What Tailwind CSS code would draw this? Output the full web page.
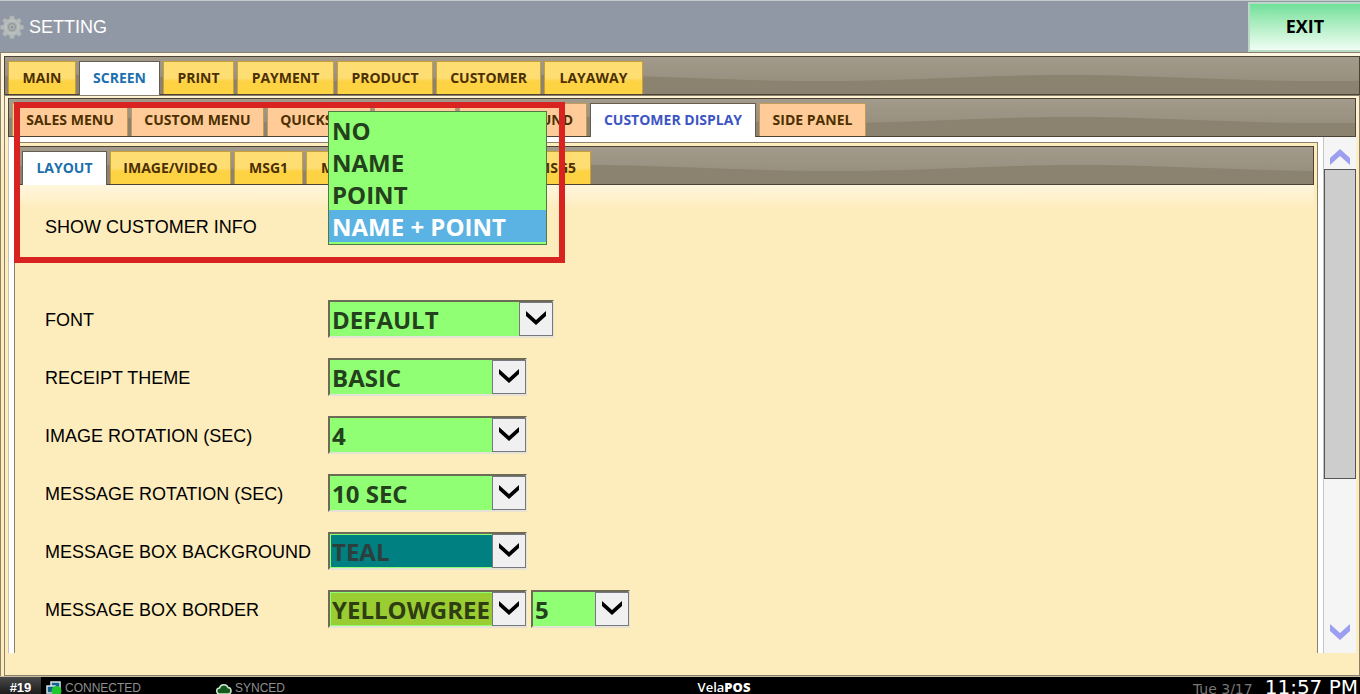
<!DOCTYPE html>
<html lang="en">
<head>
  <meta charset="UTF-8">
  <meta name="viewport" content="width=device-width, initial-scale=1.0">
  <title>VelaPOS - Setting</title>
  <script src="https://cdn.jsdelivr.net/npm/@tailwindcss/browser@4"></script>
</head>
<body class="h-screen overflow-hidden flex flex-col bg-[#fdecbc] font-['Open_Sans','Noto_Sans',sans-serif] text-black">

  <!-- shared svg parts -->
  <svg class="absolute w-0 h-0">
    <symbol id="chevron" viewBox="0 0 22 16"><path d="M1 0v5l10 9L21 5V0L11 9z"/></symbol>
    <symbol id="chevronBold" viewBox="0 0 22 16"><path d="M1 0v7l10 9L21 7V0L11 9z"/></symbol>
    <defs>
      <pattern id="wave" width="500" height="40" patternUnits="userSpaceOnUse">
        <path d="M-187 24C-96 24 -28 18 63 18C154 18 222 24 313 24C404 24 472 18 563 18V40H-187z" fill="#8b8370"/>
      </pattern>
    </defs>
  </svg>

  <!-- header -->
  <header class="h-[52px] shrink-0 flex items-center bg-[#9098a6] border-t border-[#c5cacb]">
    <svg class="w-6 h-6 shrink-0" viewBox="0 0 24 24">
      <g fill="#b3bab8" stroke="#a0a8a8" stroke-width="0.5">
        <path d="M10 1h4l.6 3 1.900.8L19 3l2.600 2.600-1.700 2.500.8 1.900 3 .6v3.400l-3 .6-.8 1.900 1.700 2.500L19 21.500l-2.500-1.700-1.900.8-.6 3h-4l-.6-3-1.900-.8L5 21.500 2.400 19l1.700-2.500-.8-1.900-3-.6v-3.400l3-.6.8-1.900L2.400 5.600 5 3l2.500 1.800L9.400 4z"/>
      </g>
      <circle cx="12" cy="12" r="6.200" fill="#a9b1b0" stroke="#c6cbc9"/>
      <circle cx="12" cy="12" r="3.400" fill="#b4bbba" stroke="#87908f"/>
      <circle cx="12" cy="12" r="1.600" fill="#8a939b"/>
    </svg>
    <h1 class="ml-[5px] font-['Liberation_Sans',Arial,sans-serif] text-lg text-white">SETTING</h1>
    <button type="button" class="ml-auto w-28 h-[50px] pb-[2px] border-2 border-r-0 border-[#b9d8c6] bg-linear-to-b from-[#6fe09a] to-[#effdf3] font-bold text-lg">EXIT</button>
  </header>

  <main class="relative flex-1 min-h-0 flex flex-col pt-[3px] pl-[3px] border-t border-l border-[#8c806c] bg-linear-to-b from-[#fff6e0] to-[#fdecbc] to-20%">

    <!-- main tabs -->
    <nav class="relative h-[39px] shrink-0 flex items-end gap-[3px] pl-[3px] border border-[#4c4335] bg-linear-to-b from-[#a29a8a] to-[#938b7a] text-sm font-bold text-[#4c3000]">
      <svg class="absolute inset-0 w-full h-full"><rect width="100%" height="100%" fill="url(#wave)"/></svg>
      <button type="button" class="relative h-[33px] w-[68px] border border-b-0 border-[#c9a038] bg-linear-to-b from-[#fedd72] from-50% to-[#fdd243] to-60%">MAIN</button>
      <button type="button" class="relative h-[34px] -mb-px pb-[2px] w-[81px] border border-b-0 border-[#655d4e] bg-white text-[#1c6fad]">SCREEN</button>
      <button type="button" class="relative h-[33px] w-[71px] border border-b-0 border-[#c9a038] bg-linear-to-b from-[#fedd72] from-50% to-[#fdd243] to-60%">PRINT</button>
      <button type="button" class="relative h-[33px] w-[97px] border border-b-0 border-[#c9a038] bg-linear-to-b from-[#fedd72] from-50% to-[#fdd243] to-60%">PAYMENT</button>
      <button type="button" class="relative h-[33px] w-[96px] border border-b-0 border-[#c9a038] bg-linear-to-b from-[#fedd72] from-50% to-[#fdd243] to-60%">PRODUCT</button>
      <button type="button" class="relative h-[33px] w-[105px] border border-b-0 border-[#c9a038] bg-linear-to-b from-[#fedd72] from-50% to-[#fdd243] to-60%">CUSTOMER</button>
      <button type="button" class="relative h-[33px] w-[99px] border border-b-0 border-[#c9a038] bg-linear-to-b from-[#fedd72] from-50% to-[#fdd243] to-60%">LAYAWAY</button>
    </nav>

    <section class="flex-1 min-h-0 flex flex-col pt-[2px] px-[3px] pb-[22px] border border-[#8c806c]">

      <!-- screen tabs -->
      <nav class="relative h-[39px] shrink-0 flex items-end gap-[3px] pl-[3px] border border-[#4c4335] bg-linear-to-b from-[#a29a8a] to-[#938b7a] text-sm font-bold text-[#4c3000]">
        <svg class="absolute inset-0 w-full h-full"><rect width="100%" height="100%" fill="url(#wave)"/></svg>
        <button type="button" class="relative h-[33px] w-[116px] border border-b-0 border-[#c49a58] bg-[#ffcb98]">SALES MENU</button>
        <button type="button" class="relative h-[33px] w-[133px] border border-b-0 border-[#c49a58] bg-[#ffcb98]">CUSTOM MENU</button>
        <button type="button" class="relative h-[33px] w-[104px] border border-b-0 border-[#c49a58] bg-[#ffcb98]">QUICKSALE</button>
        <button type="button" class="relative h-[33px] w-[82px] border border-b-0 border-[#c49a58] bg-[#ffcb98]">TABLE</button>
        <button type="button" class="relative h-[33px] w-[128px] border border-b-0 border-[#c49a58] bg-[#ffcb98]">BACKGROUND</button>
        <button type="button" class="relative h-[34px] -mb-px pb-[2px] w-[166px] border border-b-0 border-[#655d4e] bg-white text-[#3d55c4]">CUSTOMER DISPLAY</button>
        <button type="button" class="relative h-[33px] w-[107px] border border-b-0 border-[#c49a58] bg-[#ffcb98]">SIDE PANEL</button>
      </nav>

      <div class="flex-1 min-h-0 flex">
        <div class="flex-1 flex pt-[5px] px-[5px] border-l border-[#c9c2b4] bg-white">
          <div class="flex-1 p-[3px] border border-b-0 border-[#8c806c] bg-[#fdecbc]">

            <!-- display tabs -->
            <nav class="relative h-[39px] flex items-end gap-[3px] pl-[3px] border border-[#4c4335] bg-linear-to-b from-[#a29a8a] to-[#938b7a] text-sm font-bold text-[#4c3000]">
              <svg class="absolute inset-0 w-full h-full"><rect width="100%" height="100%" fill="url(#wave)"/></svg>
              <button type="button" class="relative h-[34px] -mb-px pb-[2px] w-[85px] border border-b-0 border-[#655d4e] bg-white text-[#1c6fad]">LAYOUT</button>
              <button type="button" class="relative h-[33px] w-[121px] border border-b-0 border-[#c9a038] bg-linear-to-b from-[#fedd72] from-50% to-[#fdd243] to-60%">IMAGE/VIDEO</button>
              <button type="button" class="relative h-[33px] w-[69px] border border-b-0 border-[#c9a038] bg-linear-to-b from-[#fedd72] from-50% to-[#fdd243] to-60%">MSG1</button>
              <button type="button" class="relative h-[33px] w-[69px] border border-b-0 border-[#c9a038] bg-linear-to-b from-[#fedd72] from-50% to-[#fdd243] to-60%">MSG2</button>
              <button type="button" class="relative h-[33px] w-[69px] border border-b-0 border-[#c9a038] bg-linear-to-b from-[#fedd72] from-50% to-[#fdd243] to-60%">MSG3</button>
              <button type="button" class="relative h-[33px] w-[69px] border border-b-0 border-[#c9a038] bg-linear-to-b from-[#fedd72] from-50% to-[#fdd243] to-60%">MSG4</button>
              <button type="button" class="relative h-[33px] w-[69px] border border-b-0 border-[#c9a038] bg-linear-to-b from-[#fedd72] from-50% to-[#fdd243] to-60%">MSG5</button>
            </nav>

            <form class="pt-[13px] pl-[27px] bg-linear-to-b from-[#fff6dd] to-[#fdecbc] to-[24px]">
              <div class="relative h-[58px] mb-[34px] flex items-center">
                <label for="customerInfo" class="w-[283px] font-['Liberation_Sans',Arial,sans-serif] text-lg">SHOW CUSTOMER INFO</label>
                <!-- opened list, grows upwards over the tabs -->
                <select id="customerInfo" size="4" class="absolute left-[283px] bottom-[11px] w-[219px] h-[134px] pt-[2px] overflow-hidden appearance-none border border-[#4e7a45] bg-[#90ff74] text-2xl font-bold text-[#24401c] outline-none">
                  <option class="h-8 px-[3px] py-0 leading-8 font-bold">NO</option>
                  <option class="h-8 px-[3px] py-0 leading-8 font-bold">NAME</option>
                  <option class="h-8 px-[3px] py-0 leading-8 font-bold">POINT</option>
                  <option selected class="h-8 px-[3px] py-0 leading-8 font-bold bg-linear-to-b from-[#5ab3e2] to-[#5ab3e2] [-webkit-text-fill-color:white]">NAME + POINT</option>
                </select>
              </div>

              <div class="h-[58px] flex items-center">
                <label for="font" class="w-[283px] pt-px font-['Liberation_Sans',Arial,sans-serif] text-lg">FONT</label>
                <div class="relative w-[226px]">
                  <select id="font" class="block w-full h-[38px] pt-[2px] pl-[2px] pr-9 appearance-none border-2 border-t-[#6d6b55] border-l-[#6d6b55] border-r-[#e6e2d4] border-b-[#e6e2d4] bg-[#90ff74] text-2xl/8 font-bold text-[#24401c]"><option>DEFAULT</option></select>
                  <span class="absolute top-[2px] right-[1px] size-[34px] flex items-center justify-center border border-[#77777f] bg-[#f0f0f0] pointer-events-none"><svg class="w-[22px] h-4"><use href="#chevron"/></svg></span>
                </div>
              </div>

              <div class="h-[58px] flex items-center">
                <label for="theme" class="w-[283px] pt-px font-['Liberation_Sans',Arial,sans-serif] text-lg">RECEIPT THEME</label>
                <div class="relative w-[199px]">
                  <select id="theme" class="block w-full h-[38px] pt-[2px] pl-[2px] pr-9 appearance-none border-2 border-t-[#6d6b55] border-l-[#6d6b55] border-r-[#e6e2d4] border-b-[#e6e2d4] bg-[#90ff74] text-2xl/8 font-bold text-[#24401c]"><option>BASIC</option></select>
                  <span class="absolute top-[2px] right-[1px] size-[34px] flex items-center justify-center border border-[#77777f] bg-[#f0f0f0] pointer-events-none"><svg class="w-[22px] h-4"><use href="#chevron"/></svg></span>
                </div>
              </div>

              <div class="h-[58px] flex items-center">
                <label for="imageSec" class="w-[283px] pt-px font-['Liberation_Sans',Arial,sans-serif] text-lg">IMAGE ROTATION (SEC)</label>
                <div class="relative w-[199px]">
                  <select id="imageSec" class="block w-full h-[38px] pt-[2px] pl-[2px] pr-9 appearance-none border-2 border-t-[#6d6b55] border-l-[#6d6b55] border-r-[#e6e2d4] border-b-[#e6e2d4] bg-[#90ff74] text-2xl/8 font-bold text-[#24401c]"><option>4</option></select>
                  <span class="absolute top-[2px] right-[1px] size-[34px] flex items-center justify-center border border-[#77777f] bg-[#f0f0f0] pointer-events-none"><svg class="w-[22px] h-4"><use href="#chevron"/></svg></span>
                </div>
              </div>

              <div class="h-[58px] flex items-center">
                <label for="messageSec" class="w-[283px] pt-px font-['Liberation_Sans',Arial,sans-serif] text-lg">MESSAGE ROTATION (SEC)</label>
                <div class="relative w-[199px]">
                  <select id="messageSec" class="block w-full h-[38px] pt-[2px] pl-[2px] pr-9 appearance-none border-2 border-t-[#6d6b55] border-l-[#6d6b55] border-r-[#e6e2d4] border-b-[#e6e2d4] bg-[#90ff74] text-2xl/8 font-bold text-[#24401c]"><option>10 SEC</option></select>
                  <span class="absolute top-[2px] right-[1px] size-[34px] flex items-center justify-center border border-[#77777f] bg-[#f0f0f0] pointer-events-none"><svg class="w-[22px] h-4"><use href="#chevron"/></svg></span>
                </div>
              </div>

              <div class="h-[58px] flex items-center">
                <label for="boxBg" class="w-[283px] pt-px font-['Liberation_Sans',Arial,sans-serif] text-lg">MESSAGE BOX BACKGROUND</label>
                <div class="relative w-[199px]">
                  <select id="boxBg" class="block w-full h-[38px] pt-[2px] pl-[2px] pr-9 appearance-none border-2 border-t-[#6d6b55] border-l-[#6d6b55] border-r-[#e6e2d4] border-b-[#e6e2d4] bg-[#008080] inset-ring inset-ring-[#90ff74] text-2xl/8 font-bold text-[#2c3f3c]"><option>TEAL</option></select>
                  <span class="absolute top-[2px] right-[1px] size-[34px] flex items-center justify-center border border-[#77777f] bg-[#f0f0f0] pointer-events-none"><svg class="w-[22px] h-4"><use href="#chevron"/></svg></span>
                </div>
              </div>

              <div class="h-[58px] flex items-center">
                <label for="boxBorder" class="w-[283px] pt-px font-['Liberation_Sans',Arial,sans-serif] text-lg">MESSAGE BOX BORDER</label>
                <div class="relative w-[199px] mr-1">
                  <select id="boxBorder" class="block w-full h-[38px] pt-[2px] pl-[2px] pr-4 appearance-none border-2 border-t-[#6d6b55] border-l-[#6d6b55] border-r-[#e6e2d4] border-b-[#e6e2d4] bg-[#9acd32] inset-ring inset-ring-[#90ff74] text-2xl/8 font-bold text-[#2f3d12]"><option>YELLOWGREEN</option></select>
                  <span class="absolute top-[2px] right-[1px] size-[34px] flex items-center justify-center border border-[#77777f] bg-[#f0f0f0] pointer-events-none"><svg class="w-[22px] h-4"><use href="#chevron"/></svg></span>
                </div>
                <div class="relative w-[99px]">
                  <select aria-label="Border width" class="block w-full h-[38px] pt-[2px] pl-[2px] pr-9 appearance-none border-2 border-t-[#6d6b55] border-l-[#6d6b55] border-r-[#e6e2d4] border-b-[#e6e2d4] bg-[#90ff74] text-2xl/8 font-bold text-[#24401c]"><option>5</option></select>
                  <span class="absolute top-[2px] right-[1px] size-[34px] flex items-center justify-center border border-[#77777f] bg-[#f0f0f0] pointer-events-none"><svg class="w-[22px] h-4"><use href="#chevron"/></svg></span>
                </div>
              </div>
            </form>
          </div>
        </div>

        <!-- scrollbar -->
        <div class="w-[33px] flex flex-col border-l border-[#c4c4c4] bg-[#f5f5f5]">
          <button type="button" aria-label="Scroll up" class="h-8 pt-2 flex items-center justify-center"><svg class="w-[22px] h-4 rotate-180 fill-[#9c9ef0]"><use href="#chevronBold"/></svg></button>
          <div class="h-[310px] border border-[#555] bg-[#cdcdcd]"></div>
          <button type="button" aria-label="Scroll down" class="mt-auto h-[42px] flex items-center justify-center"><svg class="w-[22px] h-4 fill-[#9c9ef0]"><use href="#chevronBold"/></svg></button>
        </div>
      </div>
    </section>

    <!-- highlight frame -->
    <div class="absolute left-[13px] top-[49px] w-[551px] h-[161px] border-6 border-[#d92320] pointer-events-none"></div>
  </main>

  <!-- status bar -->
  <footer class="h-[18px] shrink-0 flex border-t border-[#c9bfa0] bg-black font-['Liberation_Sans',Arial,sans-serif] text-xs/[22px] text-[#8f8f8f] whitespace-nowrap">
    <div class="flex-1 flex">
      <span class="w-[41px] shrink-0 text-center text-[13px] font-bold text-white bg-linear-to-b from-[#4a4a4a] to-[#1c1c1c]">#19</span>
      <svg class="w-4 h-4 ml-[5px] mr-[3px] mt-1" viewBox="0 0 16 16">
        <path d="M5 1h9v8H5z" fill="#16628c" stroke="#d5e6ee" stroke-width="1.500"/>
        <path d="M1 5h8v7H1z" fill="#16628c" stroke="#d5e6ee" stroke-width="1.500"/>
        <circle cx="10.500" cy="10" r="5" fill="#1fc82f"/>
      </svg>
      <span class="w-[151px]">CONNECTED</span>
      <svg class="w-4 h-4 mr-[3px] mt-[5px]" viewBox="0 0 16 16">
        <path d="M4 12a3 3 0 0 1-.5-6A4.500 4.500 0 0 1 12 5.500 3.300 3.300 0 0 1 12.500 12z" fill="#155a1c" stroke="#cfe6d0" stroke-width="1.500"/>
      </svg>
      <span>SYNCED</span>
    </div>
    <div class="pl-[90px] font-['Open_Sans','Noto_Sans',sans-serif] font-semibold text-[13px]/[20px] text-white">Vela<b>POS</b></div>
    <div class="flex-1 flex items-baseline justify-end gap-3 pr-[2px] font-['DejaVu_Sans',Verdana,sans-serif]">
      <span class="text-sm text-[#777]">Tue 3/17</span>
      <time class="text-xl/5 text-white">11:57 PM</time>
    </div>
  </footer>
</body>
</html>
